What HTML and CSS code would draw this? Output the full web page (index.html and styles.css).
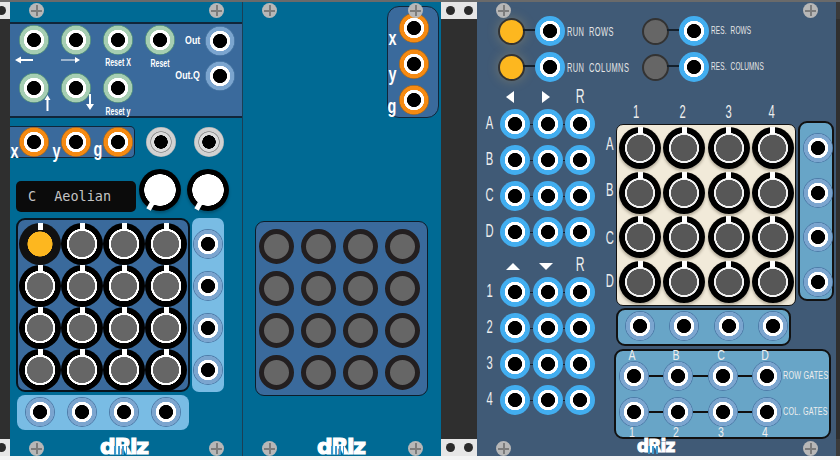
FILE: index.html
```html
<!DOCTYPE html>
<html lang="en">

<head>
  <meta charset="UTF-8" />
  <title>dRiz modules</title>
  <link rel="stylesheet" href="styles.css">
</head>

<body>
  <div class="rack">
    <div class="gap gap-left">
      <div class="rail"><i></i></div>
      <div class="rail"><i></i></div>
    </div>

    <section class="panel panel-seq">
      <span class="screw tl"></span><span class="screw tr"></span><span class="screw bl"></span><span class="screw br"></span>

      <div class="inputs">
        <div class="inputs-grid">
          <div class="jack green">
            <svg class="arrow arrow-l" width="20" height="8" viewBox="0 0 20 8"><path d="M1 4l6-3.500v2.500h12v2h-12v2.500z" fill="#fff"/></svg>
          </div>
          <div class="jack green">
            <svg class="arrow arrow-r" width="20" height="8" viewBox="0 0 20 8"><path d="M0 3.400h14v-2.400l5 3-5 3v-2.400h-14z" fill="#fff"/></svg>
          </div>
          <div class="jack green"><span class="tag small">Reset X</span></div>
          <div class="jack green"><span class="tag small low">Reset</span></div>
          <div class="jack green">
            <svg class="arrow arrow-u" width="7" height="16" viewBox="0 0 7 16"><path d="M3.500 0l3 5h-2v11h-2v-11h-2z" fill="#fff"/></svg>
          </div>
          <div class="jack green">
            <svg class="arrow arrow-d" width="8" height="16" viewBox="0 0 8 16"><path d="M3 0h2v10h3l-4 6-4-6h3z" fill="#fff"/></svg>
          </div>
          <div class="jack green"><span class="tag small low">Reset y</span></div>
        </div>
        <div class="outs">
          <div class="out"><span class="out-tag">Out</span><div class="jack blue"></div></div>
          <div class="out"><span class="out-tag">Out.Q</span><div class="jack blue"></div></div>
        </div>
      </div>

      <div class="clock-row">
        <div class="xyg">
          <div class="jack orange"><span class="letter">x</span></div>
          <div class="jack orange"><span class="letter">y</span></div>
          <div class="jack orange"><span class="letter">g</span></div>
        </div>
        <div class="jack grey"></div>
        <div class="jack grey"></div>
      </div>

      <div class="scale-row">
        <div class="display"><span>C</span><span>Aeolian</span></div>
        <div class="dial"></div>
        <div class="dial"></div>
      </div>

      <div class="matrix-row">
        <div class="step-grid">
          <div class="knob lit"></div><div class="knob"></div><div class="knob"></div><div class="knob"></div>
          <div class="knob"></div><div class="knob"></div><div class="knob"></div><div class="knob"></div>
          <div class="knob"></div><div class="knob"></div><div class="knob"></div><div class="knob"></div>
          <div class="knob"></div><div class="knob"></div><div class="knob"></div><div class="knob"></div>
        </div>
        <div class="side-col">
          <div class="jack blue"></div><div class="jack blue"></div><div class="jack blue"></div><div class="jack blue"></div>
        </div>
      </div>

      <div class="bottom-row">
        <div class="jack blue"></div><div class="jack blue"></div><div class="jack blue"></div><div class="jack blue"></div>
      </div>

      <div class="logo logo-seq">dRiz</div>
    </section>

    <section class="panel panel-expander">
      <span class="screw tl"></span><span class="screw tr"></span><span class="screw bl"></span><span class="screw br"></span>

      <div class="xyg-col">
        <div class="jack orange"><span class="letter">x</span></div>
        <div class="jack orange"><span class="letter">y</span></div>
        <div class="jack orange"><span class="letter">g</span></div>
      </div>

      <div class="led-grid">
        <div class="led"></div><div class="led"></div><div class="led"></div><div class="led"></div>
        <div class="led"></div><div class="led"></div><div class="led"></div><div class="led"></div>
        <div class="led"></div><div class="led"></div><div class="led"></div><div class="led"></div>
        <div class="led"></div><div class="led"></div><div class="led"></div><div class="led"></div>
      </div>

      <div class="logo logo-expander">dRiz</div>
    </section>

    <div class="gap gap-mid">
      <div class="rail"><i></i><i></i></div>
      <div class="rail"><i></i><i></i></div>
    </div>

    <section class="panel panel-router">
      <span class="screw tl"></span><span class="screw tr"></span><span class="screw bl"></span><span class="screw br"></span>

      <div class="status">
        <div class="status-item"><span class="lamp on"></span><div class="jack cyan"></div><span class="status-tag">RUN ROWS</span></div>
        <div class="status-item"><span class="lamp"></span><div class="jack cyan"></div><span class="status-tag thin">RES. ROWS</span></div>
        <div class="status-item"><span class="lamp on"></span><div class="jack cyan"></div><span class="status-tag">RUN COLUMNS</span></div>
        <div class="status-item"><span class="lamp"></span><div class="jack cyan"></div><span class="status-tag thin">RES. COLUMNS</span></div>
      </div>

      <div class="router-body">
        <div class="patch">
          <span></span>
          <span class="patch-head"><i class="tri tri-l"></i></span>
          <span class="patch-head"><i class="tri tri-r"></i></span>
          <span class="patch-head"><b class="head-r">R</b></span>

          <span class="name">A</span><div class="jack cyan tied"></div><div class="jack cyan tied"></div><div class="jack cyan"></div>
          <span class="name">B</span><div class="jack cyan tied"></div><div class="jack cyan tied"></div><div class="jack cyan"></div>
          <span class="name">C</span><div class="jack cyan tied"></div><div class="jack cyan tied"></div><div class="jack cyan"></div>
          <span class="name">D</span><div class="jack cyan tied"></div><div class="jack cyan tied"></div><div class="jack cyan"></div>

          <span></span>
          <span class="patch-head"><i class="tri tri-u"></i></span>
          <span class="patch-head"><i class="tri tri-d"></i></span>
          <span class="patch-head"><b class="head-r">R</b></span>

          <span class="name">1</span><div class="jack cyan tied"></div><div class="jack cyan tied"></div><div class="jack cyan"></div>
          <span class="name">2</span><div class="jack cyan tied"></div><div class="jack cyan tied"></div><div class="jack cyan"></div>
          <span class="name">3</span><div class="jack cyan tied"></div><div class="jack cyan tied"></div><div class="jack cyan"></div>
          <span class="name">4</span><div class="jack cyan tied"></div><div class="jack cyan tied"></div><div class="jack cyan"></div>
        </div>

        <div class="mixer">
          <div class="col-names"><span>1</span><span>2</span><span>3</span><span>4</span></div>
          <div class="mixer-row">
            <div class="row-names"><span>A</span><span>B</span><span>C</span><span>D</span></div>
            <div class="cream">
              <div class="knob dark"></div><div class="knob dark"></div><div class="knob dark"></div><div class="knob dark"></div>
              <div class="knob dark"></div><div class="knob dark"></div><div class="knob dark"></div><div class="knob dark"></div>
              <div class="knob dark"></div><div class="knob dark"></div><div class="knob dark"></div><div class="knob dark"></div>
              <div class="knob dark"></div><div class="knob dark"></div><div class="knob dark"></div><div class="knob dark"></div>
            </div>
            <div class="tray-col">
              <div class="jack blue"></div><div class="jack blue"></div><div class="jack blue"></div><div class="jack blue"></div>
            </div>
          </div>
          <div class="tray-row">
            <div class="jack blue"></div><div class="jack blue"></div><div class="jack blue"></div><div class="jack blue"></div>
          </div>
          <div class="gates">
            <div class="gate-row">
              <div class="jack blue tied wide"><span class="gate-name top">A</span></div>
              <div class="jack blue tied wide"><span class="gate-name top">B</span></div>
              <div class="jack blue tied wide"><span class="gate-name top">C</span></div>
              <div class="jack blue"><span class="gate-name top">D</span></div>
              <span class="gate-tag">ROW GATES</span>
            </div>
            <div class="gate-row">
              <div class="jack blue tied wide"><span class="gate-name under">1</span></div>
              <div class="jack blue tied wide"><span class="gate-name under">2</span></div>
              <div class="jack blue tied wide"><span class="gate-name under">3</span></div>
              <div class="jack blue"><span class="gate-name under">4</span></div>
              <span class="gate-tag">COL. GATES</span>
            </div>
          </div>
          <div class="logo logo-router">dRiz</div>
        </div>
      </div>
    </section>

    <div class="gap gap-right">
      <div class="rail"></div>
      <div class="rail"></div>
    </div>
  </div>
</body>

</html>
```

FILE: styles.css
```css
:root {
  --panel-blue: #006a94;
  --panel-slate: #405a76;
  --section: #3a6a9c;
  --tray: #79bce4;
  --tray-dark: #68a5c7;
  --rail: #e6e6e6;
  --label: 'Liberation Sans', sans-serif;
}

* {
  margin: 0;
  padding: 0;
  box-sizing: border-box;
}

body {
  width: 840px;
  height: 460px;
  background: #f4f4f4;
  overflow: hidden;
}

.rack {
  display: flex;
  height: 456px;
  border-top: 2px solid #6a6a6a;
  background: #2f2f2f;
}

.gap {
  display: flex;
  flex-direction: column;
  justify-content: space-between;
  flex: none;
}

.gap-left {
  width: 10px;
  overflow: hidden;
}

.gap-left .rail {
  justify-content: flex-start;
  margin-left: -3px;
}

.gap-mid {
  width: 36px;
}

.gap-right {
  width: 4px;
}

.gap-right .rail {
  background: #3a3a3a;
}

.rail {
  height: 17px;
  display: flex;
  align-items: center;
  justify-content: center;
  gap: 9px;
  background: var(--rail);
}

.rail i {
  width: 9px;
  height: 9px;
  border-radius: 50%;
  background: #2a2a2a;
}

.panel {
  position: relative;
  flex: none;
  height: 454px;
  display: flex;
  flex-direction: column;
}

.panel-seq {
  width: 233px;
  background: var(--panel-blue);
  border-right: 1px solid #1b3f55;
}

.panel-expander {
  width: 198px;
  background: var(--panel-blue);
}

.panel-router {
  width: 359px;
  background: var(--panel-slate);
}

/* screws sit on top of whatever is under them */
.screw {
  position: absolute;
  width: 15px;
  height: 15px;
  border-radius: 50%;
  background: #b7b7b7;
  z-index: 5;
}

.screw::before,
.screw::after {
  content: '';
  position: absolute;
  background: #7c7c7c;
}

.screw::before {
  left: 2px;
  right: 2px;
  top: 6.500px;
  height: 2px;
}

.screw::after {
  top: 2px;
  bottom: 2px;
  left: 6.500px;
  width: 2px;
}

.tl {
  left: 19px;
  top: 1px;
}

.tr {
  right: 18px;
  top: 1px;
}

.bl {
  left: 19px;
  bottom: 0;
}

.br {
  right: 18px;
  bottom: 0;
}

/* jacks */
.jack {
  --ring: #7ba5cf;
  --edge: #4d7ba8;
  position: relative;
  flex: none;
  width: 30px;
  height: 30px;
  border-radius: 50%;
  background: radial-gradient(circle, #000 0 6.800px, #fff 7.300px 10px, var(--ring) 10.500px 14px, var(--edge) 14.400px 15px);
}

.green {
  --ring: #a6ceb2;
  --edge: #5d9a80;
}

.orange {
  --ring: #f58a12;
  --edge: #b06c1c;
}

.cyan {
  --ring: #42aef0;
  --edge: #42aef0;
}

.grey {
  background: radial-gradient(circle, #000 0 6.500px, #ddd 7px 9.500px, #999 10px 10.500px, #d2d2d2 11px 14px, #bcbcbc 14.400px 15px);
}

.tied::after {
  content: '';
  position: absolute;
  left: 100%;
  top: 14.500px;
  width: 2.500px;
  height: 1px;
  background: #14202c;
}

.tied.wide::after {
  top: 14px;
  width: 14.330px;
  height: 2px;
  background: #111;
}

/* knobs */
.knob {
  position: relative;
  width: 42px;
  height: 42px;
  border-radius: 50%;
  background: radial-gradient(circle, #666 0 12.800px, #fff 13.300px 15px, #000 15.500px 21px);
}

.knob::before {
  content: '';
  position: absolute;
  left: 18.500px;
  top: 0;
  width: 5px;
  height: 7px;
  background: #fff;
}

.knob.lit {
  background: radial-gradient(circle, #fdb71f 0 12.300px, #111 12.800px 21px);
}

.knob.dark {
  background: radial-gradient(circle, #575757 0 12.800px, #f2f2f2 13.300px 14.800px, #000 15.300px 21px);
  box-shadow: 0 2px 3px rgba(60, 50, 30, 0.35);
}

.dial {
  position: relative;
  flex: none;
  width: 42px;
  height: 42px;
  border-radius: 50%;
  background: radial-gradient(circle, #fff 0 15.500px, #000 16px 21px);
  box-shadow: 0 2px 3px rgba(0, 0, 0, 0.25);
}

.dial::before {
  content: '';
  position: absolute;
  left: 8.500px;
  top: 33px;
  width: 5px;
  height: 8px;
  background: #fff;
  transform: rotate(30deg);
}

/* small print, squeezed since no narrow face is around */
.tag {
  position: absolute;
  left: 50%;
  top: calc(100% + 3px);
  transform: translateX(-50%) scaleX(0.7);
  white-space: nowrap;
  font: bold 10px/9px var(--label);
  color: #fff;
}

.tag.low {
  top: calc(100% + 4px);
}

.letter {
  position: absolute;
  right: 100%;
  bottom: -3px;
  font: bold 16px/16px var(--label);
  color: #fff;
  transform: scale(0.9, 1.25);
}

.jack:nth-child(3) .letter {
  bottom: -1px;
}

.arrow {
  position: absolute;
}

.arrow-l {
  left: -5px;
  top: 31px;
}

.arrow-r {
  left: 0;
  top: 31px;
}

.arrow-u {
  left: 25px;
  top: 22px;
}

.arrow-d {
  left: 25px;
  top: 21px;
}

/* first module */
.inputs {
  display: flex;
  height: 96px;
  margin-top: 20px;
  padding: 1px 0 0 9px;
  background: var(--section);
  border-top: 2px solid #10263a;
  border-bottom: 2px solid #10263a;
}

.inputs-grid {
  display: grid;
  grid-template-columns: repeat(4, 30px);
  grid-auto-rows: 30px;
  gap: 18px 12px;
  width: 156px;
}

.outs {
  display: flex;
  flex-direction: column;
  gap: 5px;
  width: 60px;
  padding-top: 1px;
}

.out {
  display: flex;
  align-items: center;
  justify-content: flex-end;
  gap: 5px;
}

.out-tag {
  font: bold 10px/10px var(--label);
  color: #fff;
  transform: scaleX(0.88);
  transform-origin: right center;
}

.clock-row {
  display: flex;
  align-items: center;
  margin-top: 8px;
  height: 32px;
}

.xyg {
  display: flex;
  gap: 12px;
  width: 126px;
  height: 32px;
  padding: 0 0 0 9px;
  align-items: center;
  margin-right: 11px;
  background: var(--section);
  border: 1px solid #10263a;
  border-left: 0;
  border-radius: 0 5px 5px 5px;
}

.clock-row > .grey {
  margin-right: 18px;
}

.scale-row {
  display: flex;
  align-items: flex-start;
  gap: 6px;
  height: 43px;
  margin-top: 11px;
  padding-left: 6px;
}

.display {
  display: flex;
  gap: 18px;
  width: 120px;
  height: 31px;
  margin: 12px -3px 0 0;
  padding-left: 12px;
  background: #0b0b0b;
  border-radius: 5px;
  font: 13.500px/31px 'DejaVu Sans Mono', monospace;
  color: #c4c4c4;
}

.matrix-row {
  display: flex;
  gap: 2px;
  margin-top: 6px;
  padding-left: 6px;
}

.step-grid {
  display: grid;
  grid-template-columns: repeat(4, 42px);
  grid-auto-rows: 42px;
  width: 174px;
  height: 174px;
  padding: 3px 0 0 1px;
  background: var(--section);
  border: 2px solid #08131c;
  border-radius: 9px;
}

.side-col {
  display: flex;
  flex-direction: column;
  gap: 12px;
  width: 32px;
  height: 174px;
  padding: 11px 0 0 1px;
  background: var(--tray);
  border-radius: 7px;
}

.bottom-row {
  display: flex;
  gap: 12px;
  width: 172px;
  height: 35px;
  margin: 3px 0 0 7px;
  padding: 2px 0 0 8px;
  background: var(--tray);
  border-radius: 8px;
}

/* logo: real letters with the paint running down the R */
.logo {
  position: relative;
  width: 51px;
  font: bold 22px/17px 'DejaVu Sans', sans-serif;
  letter-spacing: -1.300px;
  white-space: nowrap;
  color: #fff;
  -webkit-text-stroke: 1.200px #fff;
}

.logo::after {
  content: '';
  position: absolute;
  left: 14px;
  top: 8px;
  width: 13px;
  height: 9px;
  background: repeating-linear-gradient(90deg, #3f98cc 0 2px, transparent 2px 4px);
}

.logo-seq {
  margin: 8px 0 0 90px;
}

.panel-expander .logo {
  margin: 42px 0 0 74px;
}

.logo-router {
  width: 40px;
  margin: 0 0 0 37.500px;
  font-size: 17px;
  line-height: 15px;
  letter-spacing: -0.900px;
  -webkit-text-stroke-width: 1px;
}

.logo-router::after {
  left: 11px;
  top: 7px;
  width: 10px;
  height: 8px;
}

/* second module */
.xyg-col {
  display: flex;
  flex-direction: column;
  gap: 6px;
  align-self: flex-end;
  width: 52px;
  height: 112px;
  margin: 4px 2px 0 0;
  padding: 6px 0 0 11px;
  background: var(--section);
  border: 1px solid #10263a;
  border-radius: 12px;
}

.xyg-col .letter {
  right: calc(100% + 2px);
  bottom: -4px;
}

.xyg-col .jack:nth-child(3) .letter {
  bottom: 0;
}

.led-grid {
  display: grid;
  grid-template-columns: repeat(4, 42px);
  grid-auto-rows: 42px;
  width: 173px;
  height: 175px;
  margin: 103px 0 0 12px;
  padding: 6.500px 0 0 2.500px;
  background: var(--section);
  border: 1px solid #0d1d2b;
  border-radius: 9px;
}

.led {
  width: 35px;
  height: 35px;
  border-radius: 50%;
  background: #666;
  border: 5px solid #231f20;
}

/* third module */
.status {
  display: grid;
  grid-template-columns: 144px 1fr;
  gap: 6px 0;
  margin: 14px 0 0 21px;
}

.status-item {
  display: flex;
  align-items: center;
  height: 30px;
}

.lamp {
  flex: none;
  position: relative;
  width: 27px;
  height: 27px;
  margin-right: 10px;
  border-radius: 50%;
  background: #666;
  border: 2.500px solid #333;
}

.lamp::after {
  content: '';
  position: absolute;
  left: 100%;
  top: 9.500px;
  width: 12px;
  height: 1.500px;
  background: #14202c;
}

.lamp.on {
  background: #fdb71f;
  box-shadow: 0 0 12px rgba(255, 200, 90, 0.25);
}

.status-tag {
  margin-left: 2px;
  font: 10.500px/12px var(--label);
  letter-spacing: 0.600px;
  word-spacing: 3px;
  white-space: nowrap;
  color: #e6e6e6;
  transform: scale(0.71, 1.15);
  transform-origin: left center;
}

.status-tag.thin {
  font-size: 9.500px;
  letter-spacing: 0.200px;
  transform: scale(0.68, 1.15);
}

.router-body {
  display: flex;
  margin-top: 3px;
}

.patch {
  display: grid;
  grid-template-columns: 21px repeat(3, 32.500px);
  grid-template-rows: 24px repeat(4, 36px) 24px repeat(4, 36px);
  width: 120.500px;
  margin-left: 2px;
}

.patch-head {
  display: flex;
  align-items: center;
  justify-content: center;
  width: 30px;
}

.head-r {
  font: 17px/24px var(--label);
  color: #eee;
  transform: scale(0.72, 1.2);
}

.name {
  font: 16px/30px var(--label);
  color: #eee;
  text-align: center;
  transform: scale(0.7, 1.2);
}

.tri {
  width: 0;
  height: 0;
  border-style: solid;
  border-color: transparent;
}

.tri-l {
  border-width: 6px 8px 6px 0;
  border-right-color: #fff;
  margin-right: 10px;
}

.tri-r {
  border-width: 6px 0 6px 8px;
  border-left-color: #fff;
  margin-right: 3px;
}

.tri-u {
  border-width: 0 7.500px 7px;
  border-bottom-color: #fff;
  margin: 3px 5px 0 0;
}

.tri-d {
  border-width: 7px 7.500px 0;
  border-top-color: #fff;
  margin: 3px 3px 0 0;
}

.mixer {
  display: flex;
  flex-direction: column;
  margin-top: 17px;
}

.col-names {
  display: grid;
  grid-template-columns: 46px 47px 45px 41px;
  height: 22px;
  margin-left: 13.500px;
  text-align: center;
  font: 16px/20px var(--label);
  color: #eee;
}

.col-names span {
  transform: scale(0.7, 1.2);
}

.mixer-row {
  display: flex;
  align-items: flex-start;
}

.row-names {
  display: grid;
  grid-auto-rows: 44.670px;
  width: 16.500px;
  height: 182px;
  padding: 14px 0 0 3px;
  text-align: center;
  font: 16px/18px var(--label);
  color: #eee;
}

.row-names span {
  transform: scale(0.7, 1.2);
}

.row-names span:nth-child(2) {
  margin-top: 1px;
}

.row-names span:nth-child(3) {
  margin-top: 4px;
}

.row-names span:nth-child(4) {
  margin-top: 2px;
}

.cream {
  display: grid;
  grid-template-columns: repeat(4, 44.330px);
  grid-auto-rows: 44.670px;
  flex: none;
  width: 180px;
  height: 182px;
  padding: 2px 0 0 2px;
  background: #f1ead9;
  border: 1px solid #111;
  border-radius: 7px;
}

.tray-col {
  display: flex;
  flex-direction: column;
  gap: 14.670px;
  flex: none;
  width: 36px;
  height: 180px;
  margin: -3px 0 0 2px;
  padding: 10px 0 0 3px;
  background: var(--tray-dark);
  border: 2px solid #111;
  border-radius: 9px;
}

.tray-row {
  display: flex;
  gap: 14.330px;
  width: 175px;
  height: 38px;
  margin: 2px 0 0 16.500px;
  padding: 1px 0 0 7px;
  background: var(--tray-dark);
  border: 2px solid #111;
  border-radius: 9px;
}

.gates {
  display: flex;
  flex-direction: column;
  gap: 6px;
  width: 217px;
  height: 90px;
  margin: 3px 0 0 14.500px;
  padding: 10px 0 0 3px;
  background: var(--tray-dark);
  border: 2px solid #111;
  border-radius: 9px;
}

.gate-row {
  display: flex;
  align-items: center;
  gap: 14.330px;
}

.gate-tag {
  margin-left: -13px;
  font: 10px/12px var(--label);
  letter-spacing: 0.300px;
  white-space: nowrap;
  color: #eee;
  transform: scale(0.72, 1.1);
  transform-origin: left center;
}

.gate-name {
  position: absolute;
  left: 0;
  width: 26px;
  text-align: center;
  font: 14px/13px var(--label);
  color: #eee;
  transform: scale(0.75, 1.1);
}

.gate-name.top {
  top: -12px;
}

.gate-name.under {
  bottom: -12px;
}
```
